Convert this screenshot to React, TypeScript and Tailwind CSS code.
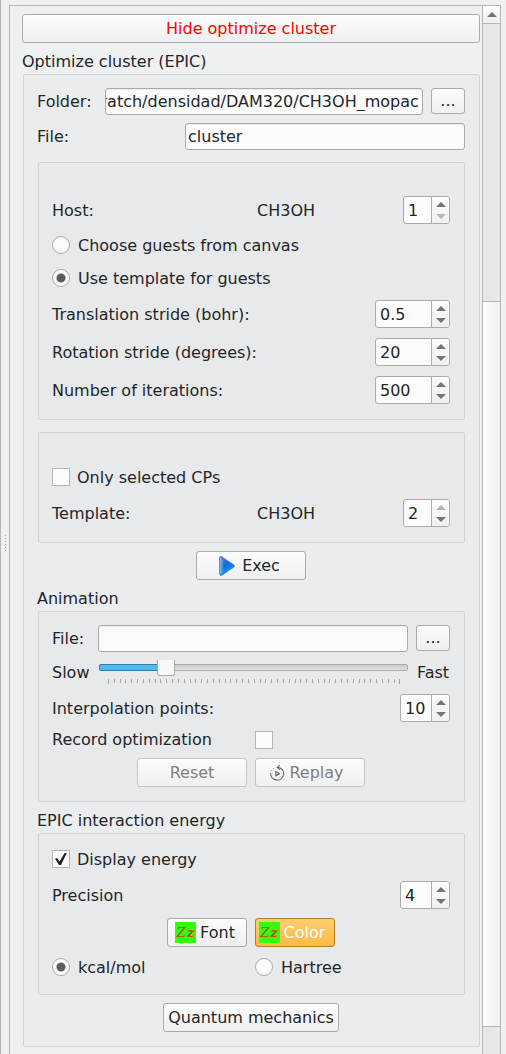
import { useEffect, useId, useRef, useState } from "react";
import type { ReactNode } from "react";

const FIELD =
  "h-[27px] min-w-0 rounded-[3px] border border-[#a9abad] bg-[#fcfcfc] text-[#232629] outline-none shadow-[inset_0_1px_1px_#ececec]";

function PushButton({
  children,
  className = "",
  tone = "normal",
  disabled = false,
  onClick,
}: {
  children: ReactNode;
  className?: string;
  tone?: "normal" | "danger" | "active";
  disabled?: boolean;
  onClick?: () => void;
}) {
  const tones = {
    normal: "border-[#a9abad] from-[#fcfcfc] to-[#f0f0f0] text-[#232629]",
    danger: "border-[#a9abad] from-[#fcfcfc] to-[#f0f0f0] text-[#ff0000]",
    active: "border-[#b87f1c] from-[#ffcd70] to-[#fbbb42] text-[#fcfcfc]",
  };
  return (
    <button
      type="button"
      disabled={disabled}
      onClick={onClick}
      className={`flex h-[29px] items-center justify-center rounded-[3px] border bg-linear-to-b whitespace-nowrap disabled:border-[#c3c5c7] disabled:text-[#7d7f82] ${tones[tone]} ${className}`}
    >
      {children}
    </button>
  );
}

function BrowseButton({ label }: { label: string }) {
  return (
    <button
      type="button"
      aria-label={label}
      className="h-[26px] w-[34px] shrink-0 rounded-[3px] border border-[#a9abad] bg-linear-to-b from-[#fcfcfc] to-[#f0f0f0] leading-6"
    >
      ...
    </button>
  );
}

function Panel({ children, className = "", inner = false }: { children: ReactNode; className?: string; inner?: boolean }) {
  return (
    <div
      className={`ml-px flex flex-col rounded-[2px] border border-[#d2d4d6] pr-[14px] pl-[13px] ${inner ? "bg-[#e8e9eb]" : "bg-[#ebecee]"} ${className}`}
    >
      {children}
    </div>
  );
}

function SpinBox({
  id,
  initial,
  min,
  max,
  step = 1,
  className,
}: {
  id: string;
  initial: number;
  min: number;
  max: number;
  step?: number;
  className: string;
}) {
  const [value, setValue] = useState(initial);
  const move = (delta: number) =>
    setValue((v) => Math.min(max, Math.max(min, Number((v + delta).toFixed(3)))));
  return (
    <div
      className={`flex h-7 shrink-0 overflow-hidden rounded-[3px] border border-[#a9abad] bg-[#fcfcfc] ${className}`}
    >
      <input
        id={id}
        type="text"
        inputMode="decimal"
        value={value}
        onChange={(e) => setValue(Number(e.target.value) || min)}
        className="w-0 min-w-0 flex-1 bg-transparent pt-0.5 pl-1 leading-6 outline-none"
      />
      <div className="flex w-[18px] flex-col border-l border-[#a9abad] bg-linear-to-b from-[#fcfcfc] to-[#f0f0f0]">
        <button
          type="button"
          aria-label="Increase"
          disabled={value >= max}
          onClick={() => move(step)}
          className="flex flex-1 items-end justify-center pb-[3px] text-[#727476] disabled:text-[#b3b5b6]"
        >
          <svg width="10" height="5" viewBox="0 0 10 5" fill="currentColor">
            <path d="M0 5 5 0l5 5z" />
          </svg>
        </button>
        <button
          type="button"
          aria-label="Decrease"
          disabled={value <= min}
          onClick={() => move(-step)}
          className="flex flex-1 items-start justify-center pt-1 text-[#727476] disabled:text-[#b3b5b6]"
        >
          <svg width="10" height="5" viewBox="0 0 10 5" fill="currentColor">
            <path d="M0 0h10L5 5z" />
          </svg>
        </button>
      </div>
    </div>
  );
}

function Radio({ name, label, defaultChecked = false }: { name: string; label: string; defaultChecked?: boolean }) {
  return (
    <label className="flex h-[23px] items-center gap-2">
      <input
        type="radio"
        name={name}
        defaultChecked={defaultChecked}
        className="mt-0.5 size-[18px] shrink-0 appearance-none self-start rounded-full border border-[#a9abad] bg-[#fcfcfc] checked:bg-[radial-gradient(circle,#5a5c5e_4px,#fcfcfc_5px)]"
      />
      {label}
    </label>
  );
}

function CheckBox({ id, defaultChecked = false }: { id: string; defaultChecked?: boolean }) {
  return (
    <span className="grid size-[18px] shrink-0">
      <input
        id={id}
        type="checkbox"
        defaultChecked={defaultChecked}
        className="peer col-start-1 row-start-1 size-[18px] appearance-none border border-[#b4b6b8] bg-[#fcfcfc]"
      />
      <svg
        className="pointer-events-none invisible col-start-1 row-start-1 peer-checked:visible"
        width="18"
        height="18"
        viewBox="0 0 18 18"
      >
        <path d="M3 8.8 5 8l2.6 3.6L12.6 3h2.2L9 15H7z" fill="#1c1f21" />
      </svg>
    </span>
  );
}

function CheckRow({ id, label, defaultChecked = false }: { id: string; label: string; defaultChecked?: boolean }) {
  return (
    <div className="flex h-[23px] items-start gap-[7px] pt-0.5">
      <CheckBox id={id} defaultChecked={defaultChecked} />
      <label htmlFor={id} className="leading-[19px]">
        {label}
      </label>
    </div>
  );
}

function NumberRow({ label, ...spin }: { label: string; initial: number; min: number; max: number; step?: number; className: string }) {
  const id = useId();
  return (
    <div className="flex items-center justify-between">
      <label htmlFor={id} className="pt-0.5">
        {label}
      </label>
      <SpinBox id={id} {...spin} />
    </div>
  );
}

function MoleculeRow({ label, molecule, initial }: { label: string; molecule: string; initial: number }) {
  const id = useId();
  return (
    <div className="grid grid-cols-2 items-center gap-2">
      <label htmlFor={id} className="pt-0.5">
        {label}
      </label>
      <div className="flex items-center justify-between pl-0.5">
        <span className="pt-0.5">{molecule}</span>
        <SpinBox id={id} initial={initial} min={1} max={2} className="w-[47px]" />
      </div>
    </div>
  );
}

function PlayIcon() {
  return (
    <svg width="16" height="20" viewBox="0 0 16 20">
      <defs>
        <linearGradient id="play-face" x1="0" y1="0" x2="0.4" y2="1">
          <stop offset="0" stopColor="#5c86cc" />
          <stop offset="0.5" stopColor="#0f6bd6" />
          <stop offset="1" stopColor="#0a9bff" />
        </linearGradient>
        <linearGradient id="play-edge" x1="0" y1="0" x2="1" y2="0">
          <stop offset="0" stopColor="#a9c4ea" stopOpacity="0.8" />
          <stop offset="1" stopColor="#a9c4ea" stopOpacity="0" />
        </linearGradient>
      </defs>
      <path d="M.5 1.5Q.8 0 2.5.6L15 9q1 1 0 2L3 19.2Q.7 20 .5 18z" fill="url(#play-face)" stroke="#3c78c8" strokeWidth="0.6" />
      <path d="M1 1.5 5 4v12l-4 2.6z" fill="url(#play-edge)" />
    </svg>
  );
}

function ReplayIcon() {
  return (
    <svg width="15" height="16" viewBox="0 0 15 16" fill="none" stroke="#5f6163" strokeWidth="1.1">
      <path d="M.8 8A6.4 6.4 0 1 0 10.5 3.2Q9.6 2.5 8 2.5" />
      <path d="M1.6 5.8l.5-.9M3.2 3.8l.9-.6" strokeWidth="0.8" />
      <path d="M9.8.2 7.2 2.4l2.6 2.2" />
      <path d="M5.9 6.6v4.2l3.6-2.1z" />
    </svg>
  );
}

function SampleIcon() {
  return (
    <span
      aria-hidden="true"
      className="flex size-[21px] items-center justify-center gap-px overflow-hidden bg-[#33ff0a] font-['DejaVu_Serif',serif] text-[13px] leading-[19px] font-bold text-[#e0301c] italic"
    >
      <span className="font-normal text-[#a8501c]">Z</span>z
    </span>
  );
}

function SpeedSlider({ id }: { id: string }) {
  const [speed, setSpeed] = useState(10);
  return (
    <div className="ml-px flex h-6 min-w-0 flex-1 flex-col">
      <div className="grid h-4">
        <div className="col-start-1 row-start-1 mt-1 flex h-[7px] rounded-[2px] border border-[#a9abad] bg-linear-to-b from-[#c9cbcc] to-[#dcdedf]">
          <div
            className="-my-px -ml-px shrink-0 rounded-l-[2px] border border-[#2f7fb0] bg-[#54b9f3]"
            style={{ width: `${speed * 2}%` }}
          />
        </div>
        <input
          id={id}
          type="range"
          min={0}
          max={50}
          value={speed}
          onChange={(e) => setSpeed(Number(e.target.value))}
          className="z-10 col-start-1 row-start-1 m-0 h-4 w-full appearance-none bg-transparent [&::-webkit-slider-thumb]:h-4 [&::-webkit-slider-thumb]:w-[18px] [&::-webkit-slider-thumb]:appearance-none [&::-webkit-slider-thumb]:rounded-b-[3px] [&::-webkit-slider-thumb]:border [&::-webkit-slider-thumb]:border-t-0 [&::-webkit-slider-thumb]:border-[#a9abad] [&::-webkit-slider-thumb]:bg-[#f9f9f9]"
        />
      </div>
      <div className="mt-[3px] flex justify-between pr-[7px] pl-[9px]">
        {Array.from({ length: 51 }, (_, i) => (
          <span key={i} className={i % 50 === 0 ? "h-[5px] w-px bg-[#a4a6a8]" : "h-1 w-px bg-[#a4a6a8]"} />
        ))}
      </div>
    </div>
  );
}

function ScrollBar() {
  return (
    <div className="flex w-[18px] shrink-0 flex-col border-l border-[#b4b6b8] bg-[#e6e8e8]">
      <button
        type="button"
        aria-label="Scroll up"
        className="flex h-[18px] items-center justify-center border-b border-[#b4b6b8] bg-linear-to-b from-[#fcfcfc] to-[#f0f0f0]"
      >
        <svg width="10" height="5" viewBox="0 0 10 5" fill="#727476">
          <path d="M0 5 5 0l5 5z" />
        </svg>
      </button>
      <div className="grow-278" />
      <div className="grow-725 border-y border-[#b4b6b8] bg-linear-to-r from-[#fdfdfd] to-[#f0f0f0]" />
      <div className="grow-27" />
    </div>
  );
}

export default function App() {
  const folder = useRef<HTMLInputElement>(null);
  const [open, setOpen] = useState(true);

  useEffect(() => {
    if (folder.current) folder.current.scrollLeft = folder.current.scrollWidth;
  }, [open]);

  return (
    <main className="flex min-h-screen border-l border-[#b4b6b8] bg-[#eff0f1] pr-[5px] font-['DejaVu_Sans',sans-serif] text-base leading-6 text-[#232629]">
      <div className="flex w-2 shrink-0 flex-col items-center justify-center gap-0.5 pt-8">
        {[0, 1, 2, 3, 4, 5].map((dot) => (
          <span key={dot} className="size-px bg-[#a4a6a8]" />
        ))}
      </div>

      <div className="mt-[5px] flex min-w-0 flex-1 border border-b-0 border-[#b4b6b8]">
        <div className="flex min-w-0 flex-1 flex-col pt-2 pr-0.5 pb-[7px] pl-3">
          <PushButton tone="danger" onClick={() => setOpen(!open)}>
            {open ? "Hide optimize cluster" : "Optimize cluster"}
          </PushButton>

          {open && (
            <>
              <h2 className="mt-[7px]">Optimize cluster (EPIC)</h2>
              <Panel className="pt-[13px] pb-[14px]">
                <div className="flex">
                  <label htmlFor="folder" className="w-[68px] shrink-0 pt-0.5">
                    Folder:
                  </label>
                  <input
                    id="folder"
                    ref={folder}
                    type="text"
                    defaultValue="/scratch/densidad/DAM320/CH3OH_mopac"
                    className={`${FIELD} mr-2 w-0 flex-1 pr-[3px]`}
                  />
                  <BrowseButton label="Browse folder" />
                </div>
                <div className="mt-2 flex">
                  <label htmlFor="file" className="w-[148px] shrink-0 pt-0.5">
                    File:
                  </label>
                  <input id="file" type="text" defaultValue="cluster" className={`${FIELD} w-0 flex-1 px-0.5`} />
                </div>

                <Panel inner className="mt-3 gap-[10px] pt-[33px] pb-[15px]">
                  <MoleculeRow label="Host:" molecule="CH3OH" initial={1} />
                  <Radio name="guests" label="Choose guests from canvas" />
                  <Radio name="guests" label="Use template for guests" defaultChecked />
                  <NumberRow label="Translation stride (bohr):" initial={0.5} min={0} max={10} step={0.1} className="w-[75px]" />
                  <NumberRow label="Rotation stride (degrees):" initial={20} min={0} max={180} className="w-[75px]" />
                  <NumberRow label="Number of iterations:" initial={500} min={0} max={10000} className="w-[75px]" />
                </Panel>

                <Panel inner className="mt-3 gap-[10px] pt-[33px] pb-[15px]">
                  <CheckRow id="only-cps" label="Only selected CPs" />
                  <MoleculeRow label="Template:" molecule="CH3OH" initial={2} />
                </Panel>

                <PushButton className="mt-2 w-[110px] gap-[7px] self-center pr-[3px]">
                  <PlayIcon />
                  Exec
                </PushButton>

                <h3 className="mt-[7px]">Animation</h3>
                <Panel inner className="pt-[13px] pb-[14px]">
                  <div className="flex">
                    <label htmlFor="movie" className="w-[46px] shrink-0 pt-0.5">
                      File:
                    </label>
                    <input id="movie" type="text" className={`${FIELD} mr-2 w-0 flex-1 px-0.5`} />
                    <BrowseButton label="Browse animation file" />
                  </div>
                  <div className="mt-2 flex h-6 leading-[26px]">
                    <label htmlFor="speed" className="w-[46px] shrink-0">
                      Slow
                    </label>
                    <SpeedSlider id="speed" />
                    <span className="ml-2 w-[34px] shrink-0 text-center">Fast</span>
                  </div>
                  <div className="mt-[10px]">
                    <NumberRow label="Interpolation points:" initial={10} min={1} max={99} className="w-[50px]" />
                  </div>
                  <div className="mt-2 grid h-5 grid-cols-2 items-center gap-2">
                    <label htmlFor="record" className="leading-5">
                      Record optimization
                    </label>
                    <CheckBox id="record" />
                  </div>
                  <div className="mt-2 grid grid-cols-2 gap-2">
                    <PushButton disabled className="w-[110px] justify-self-end">
                      Reset
                    </PushButton>
                    <PushButton disabled className="w-[110px] gap-1 pr-1.5">
                      <ReplayIcon />
                      Replay
                    </PushButton>
                  </div>
                </Panel>

                <h3 className="mt-[7px]">EPIC interaction energy</h3>
                <Panel inner className="pt-[14px] pb-[15px]">
                  <CheckRow id="display-energy" label="Display energy" defaultChecked />
                  <div className="mt-[10px]">
                    <NumberRow label="Precision" initial={4} min={0} max={20} className="w-[50px]" />
                  </div>
                  <div className="mt-[9px] grid grid-cols-2 gap-2">
                    <PushButton className="w-20 gap-1 justify-self-end pr-1">
                      <SampleIcon />
                      Font
                    </PushButton>
                    <PushButton tone="active" className="w-20 gap-1 pr-1.5">
                      <SampleIcon />
                      Color
                    </PushButton>
                  </div>
                  <div className="mt-[9px] grid grid-cols-2 gap-2">
                    <Radio name="units" label="kcal/mol" defaultChecked />
                    <Radio name="units" label="Hartree" />
                  </div>
                </Panel>

                <PushButton className="mt-2 w-44 self-center">Quantum mechanics</PushButton>
              </Panel>
            </>
          )}
        </div>
        <ScrollBar />
      </div>
    </main>
  );
}
